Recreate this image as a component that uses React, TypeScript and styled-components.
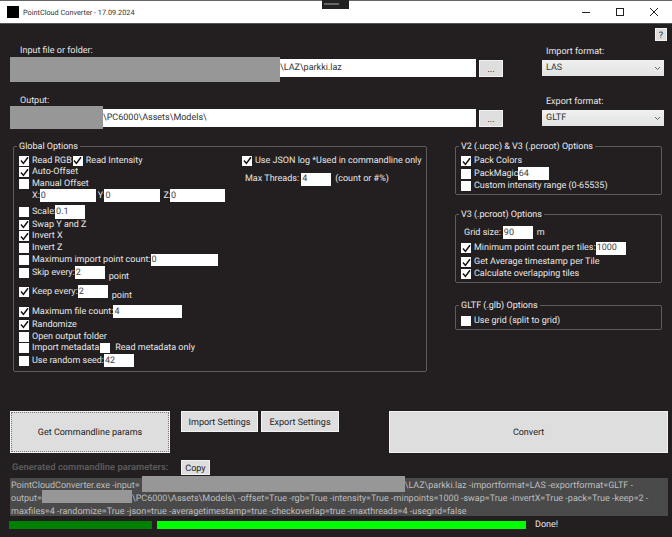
import React from "react"
import styled, { createGlobalStyle } from "styled-components"

const TEXT = 9

const Global = createGlobalStyle`
  html, body { margin: 0; padding: 0; background: #231f20; }
  * { box-sizing: border-box; }
  body {
    font-family: Roboto, "Noto Sans", sans-serif;
    font-size: ${TEXT}px;
    color: #e6e6e6;
    text-rendering: geometricPrecision;
  }
`

const Window = styled.div`
  position: relative;
  width: 672px;
  height: 537px;
  overflow: hidden;
  display: flex;
  flex-direction: column;
  background: #231f20;
`

const TitleBar = styled.header`
  height: 24px;
  flex: none;
  display: flex;
  align-items: center;
  background: #fff;
  border-top: 1px solid #666;
  border-bottom: 1px solid #555;
  padding-left: 7px;
  color: #333;
  font-size: 7.3px;
`

const AppIcon = styled.div`
  width: 12px;
  height: 12px;
  background: #000;
  margin-right: 4px;
`

const WindowButtons = styled.div`
  margin-left: auto;
  display: flex;
  margin-right: 1px;
`

const WindowButton = styled.div`
  width: 34px;
  height: 22px;
  display: flex;
  align-items: center;
  justify-content: center;
  svg { display: block; }
`

const Notch = styled.div`
  position: absolute;
  left: 322px;
  top: 0;
  width: 27px;
  height: 9px;
  background: #222;
  &::after {
    content: "";
    position: absolute;
    left: 2px;
    right: 10px;
    top: 3px;
    height: 2px;
    background: #666;
  }
`

const HelpRow = styled.div`
  height: 20px;
  flex: none;
  display: flex;
  justify-content: flex-end;
  padding: 4px 5px 0 0;
`

const Button = styled.div<{ $w: number; $h: number; $focused?: boolean }>`
  flex: none;
  width: ${(p) => p.$w}px;
  height: ${(p) => p.$h}px;
  display: flex;
  align-items: center;
  justify-content: center;
  padding-top: 2px;
  background: #dedede;
  border: 1px solid #f2f2f2;
  outline: ${(p) => (p.$focused ? "1px dotted #777" : "none")};
  outline-offset: -2px;
  color: #222;
  font-size: ${TEXT}px;
  white-space: nowrap;
`

const FormRow = styled.section<{ $mt?: number }>`
  flex: none;
  display: flex;
  align-items: flex-end;
  padding-left: 10px;
  margin-top: ${(p) => p.$mt ?? 0}px;
`

const PathField = styled.div`
  width: 466px;
  margin-right: 3px;
`

const FieldLabel = styled.div<{ $left: number }>`
  height: 15px;
  padding-top: 1px;
  line-height: 12px;
  padding-left: ${(p) => p.$left}px;
  color: #e6e6e6;
`

const PathBox = styled.div`
  position: relative;
  height: 18px;
  background: #fff;
  color: #333;
  line-height: 18px;
  white-space: nowrap;
`

const PathText = styled.span<{ $left: number }>`
  display: block;
  padding-left: ${(p) => p.$left}px;
`

const Redaction = styled.div<{ $w: number; $top: number; $h: number }>`
  position: absolute;
  left: 0;
  top: ${(p) => p.$top}px;
  width: ${(p) => p.$w}px;
  height: ${(p) => p.$h}px;
  background: #979797;
`

const FormatField = styled.div`
  width: 122px;
  margin-left: 39px;
`

const Select = styled.div`
  height: 16px;
  margin-bottom: 1px;
  display: flex;
  align-items: center;
  justify-content: space-between;
  padding: 0 3px 0 4px;
  background: linear-gradient(#f0f0f0, #e2e2e2);
  color: #333;
`

const OptionsArea = styled.main`
  flex: none;
  display: flex;
  margin-top: 13px;
  padding-left: 13px;
`

const Group = styled.fieldset<{ $w: number; $h: number; $mt?: number }>`
  width: ${(p) => p.$w}px;
  height: ${(p) => p.$h}px;
  margin: ${(p) => p.$mt ?? 0}px 0 0;
  padding: 2px 5px 0;
  border: 1px solid #5c5c5c;
  border-radius: 2px;
  min-inline-size: 0;
`

const GroupTitle = styled.legend`
  margin-left: -2px;
  padding: 1px 2px 0;
  height: 13px;
  line-height: 13px;
  color: #ececec;
`

const GlobalColumns = styled.div`
  display: flex;
`

const LeftColumn = styled.div`
  width: 223px;
  flex: none;
`

const SideColumn = styled.div`
  flex: none;
  display: flex;
  flex-direction: column;
`

const Row = styled.div<{ $h?: number; $mt?: number; $pl?: number }>`
  display: flex;
  align-items: center;
  height: ${(p) => p.$h ?? 11.5}px;
  margin-top: ${(p) => p.$mt ?? 0}px;
  padding-left: ${(p) => p.$pl ?? 0}px;
  white-space: nowrap;
`

const Box = styled.span<{ $ml?: number }>`
  flex: none;
  width: 10px;
  height: 10px;
  margin-left: ${(p) => p.$ml ?? 0}px;
  margin-right: 3px;
  background: #fff;
  display: inline-flex;
  align-items: center;
  justify-content: center;
  svg { display: block; }
`

const Caption = styled.span<{ $ml?: number }>`
  color: #e6e6e6;
  margin-left: ${(p) => p.$ml ?? 0}px;
`

const Suffix = styled(Caption)<{ $drop?: number }>`
  position: relative;
  top: ${(p) => p.$drop ?? 0}px;
  margin-left: ${(p) => p.$ml ?? 4}px;
`

const Field = styled.input<{ $w: number; $ml?: number; $h?: number }>`
  flex: none;
  width: ${(p) => p.$w}px;
  height: ${(p) => p.$h ?? 13}px;
  margin: 0 0 0 ${(p) => p.$ml ?? 0}px;
  padding: 0 1px;
  border: 0;
  outline: 0;
  background: #fff;
  color: #444;
  font-family: inherit;
  font-size: ${TEXT}px;
  text-rendering: geometricPrecision;
`

const RightColumn = styled.aside`
  margin-left: 28px;
  display: flex;
  flex-direction: column;
`

const ActionRow = styled.section`
  flex: none;
  display: flex;
  align-items: flex-start;
  margin-top: 39px;
  padding: 0 4px 0 10px;
`

const ImportButton = styled(Button)`
  margin-left: 11px;
`

const ExportButton = styled(Button)`
  margin-left: 3px;
`

const ConvertButton = styled(Button)`
  margin-left: auto;
`

const ParamsHeader = styled.div`
  flex: none;
  height: 15px;
  margin-top: 7px;
  padding-left: 12px;
  display: flex;
  align-items: center;
`

const ParamsLabel = styled.span`
  width: 169px;
  font-size: 9.4px;
  font-weight: 700;
  color: #585858;
  white-space: nowrap;
`

const ParamsBox = styled.div`
  flex: none;
  height: 38px;
  margin: 3px 4px 0 10px;
  padding: 1px 0 0 1px;
  background: #4a4a4a;
  color: #bdbdbd;
  line-height: 12.3px;
  white-space: nowrap;
`

const ParamsGap = styled.span<{ $w: number; $top: number; $h: number; $inset?: number }>`
  position: relative;
  display: inline-block;
  width: ${(p) => p.$w}px;
  height: 1em;
  &::after {
    content: "";
    position: absolute;
    left: ${(p) => p.$inset ?? 0}px;
    right: 0;
    top: ${(p) => p.$top}px;
    height: ${(p) => p.$h}px;
    background: #979797;
  }
`

const StatusRow = styled.footer`
  flex: none;
  height: 9px;
  margin-top: 4px;
  padding-left: 9px;
  display: flex;
  align-items: center;
`

const Progress = styled.div<{ $w: number; $color: string; $ml?: number }>`
  width: ${(p) => p.$w}px;
  height: 8px;
  margin-left: ${(p) => p.$ml ?? 0}px;
  background: ${(p) => p.$color};
`

const StatusText = styled.span`
  margin-left: 9px;
  color: #e6e6e6;
`

const Check = () => (
  <svg width="9" height="9" viewBox="0 0 9 9" fill="none">
    <path d="M1 4.6 L3.4 7.4 L8 1.2" stroke="#111" strokeWidth="1.5" />
  </svg>
)

const Option = ({ on, label, ...rest }: { on?: boolean; label: string; $h?: number; $mt?: number }) => (
  <Row {...rest}>
    <Box>{on && <Check />}</Box>
    <Caption>{label}</Caption>
  </Row>
)

const Chevron = () => (
  <svg width="7" height="5" viewBox="0 0 7 5" fill="none">
    <path d="M1 1 L3.5 3.5 L6 1" stroke="#666" strokeWidth="1" />
  </svg>
)

export default function App() {
  return (
    <Window>
      <Global />
      <TitleBar>
        <AppIcon />
        PointCloud Converter - 17.09.2024
        <WindowButtons>
          <WindowButton>
            <svg width="10" height="10" viewBox="0 0 10 10"><path d="M1 5.5 H9" stroke="#222" /></svg>
          </WindowButton>
          <WindowButton>
            <svg width="10" height="10" viewBox="0 0 10 10" fill="none"><rect x="1.5" y="1.5" width="7" height="7" stroke="#222" /></svg>
          </WindowButton>
          <WindowButton>
            <svg width="10" height="10" viewBox="0 0 10 10"><path d="M1 1 L9 9 M9 1 L1 9" stroke="#222" /></svg>
          </WindowButton>
        </WindowButtons>
      </TitleBar>
      <Notch />

      <HelpRow>
        <Button $w={12} $h={13}>?</Button>
      </HelpRow>

      <FormRow>
        <PathField>
          <FieldLabel $left={10}>Input file or folder:</FieldLabel>
          <PathBox>
            <PathText $left={270}>\LAZ\parkki.laz</PathText>
            <Redaction $w={270} $top={-2} $h={25} />
          </PathBox>
        </PathField>
        <Button $w={24} $h={17}>...</Button>
        <FormatField>
          <FieldLabel $left={4}>Import format:</FieldLabel>
          <Select>LAS<Chevron /></Select>
        </FormatField>
      </FormRow>

      <FormRow $mt={17}>
        <PathField>
          <FieldLabel $left={10}>Output:</FieldLabel>
          <PathBox>
            <PathText $left={93}>\PC6000\Assets\Models\</PathText>
            <Redaction $w={93} $top={-3} $h={23} />
          </PathBox>
        </PathField>
        <Button $w={24} $h={17}>...</Button>
        <FormatField>
          <FieldLabel $left={4}>Export format:</FieldLabel>
          <Select>GLTF<Chevron /></Select>
        </FormatField>
      </FormRow>

      <OptionsArea>
        <Group $w={414} $h={232}>
          <GroupTitle>Global Options</GroupTitle>
          <GlobalColumns>
            <LeftColumn>
              <Row>
                <Box><Check /></Box>
                <Caption>Read RGB</Caption>
                <Box $ml={1}><Check /></Box>
                <Caption>Read Intensity</Caption>
              </Row>
              <Option on label="Auto-Offset" />
              <Option label="Manual Offset" />
              <Row $h={12} $pl={13}>
                <Caption>X:</Caption>
                <Field $w={56} readOnly value="0" />
                <Caption $ml={2}>Y:</Caption>
                <Field $w={56} $ml={-1} readOnly value="0" />
                <Caption $ml={3}>Z:</Caption>
                <Field $w={55} $ml={-1} readOnly value="0" />
              </Row>
              <Row $h={14} $mt={3}>
                <Box />
                <Caption>Scale:</Caption>
                <Field $w={30} $h={14} $ml={-1} readOnly value="0.1" />
              </Row>
              <Option on label="Swap Y and Z" $h={12} />
              <Option on label="Invert X" />
              <Option label="Invert Z" />
              <Row $h={12}>
                <Box />
                <Caption>Maximum import point count:</Caption>
                <Field $w={67} readOnly value="0" $h={12} />
              </Row>
              <Row $h={14}>
                <Box />
                <Caption>Skip every:</Caption>
                <Field $w={30} readOnly value="2" />
                <Suffix $drop={4}>point</Suffix>
              </Row>
              <Row $h={14} $mt={5}>
                <Box><Check /></Box>
                <Caption>Keep every:</Caption>
                <Field $w={30} readOnly value="2" />
                <Suffix $drop={4}>point</Suffix>
              </Row>
              <Row $h={14} $mt={6}>
                <Box><Check /></Box>
                <Caption>Maximum file count:</Caption>
                <Field $w={69} readOnly value="4" />
              </Row>
              <Option on label="Randomize" $h={12} />
              <Option label="Open output folder" $h={12} />
              <Row>
                <Box />
                <Caption>Import metadata</Caption>
                <Box $ml={1} />
                <Caption $ml={2}>Read metadata only</Caption>
              </Row>
              <Row $h={13}>
                <Box />
                <Caption>Use random seed:</Caption>
                <Field $w={30} readOnly value="42" />
              </Row>
            </LeftColumn>
            <SideColumn>
              <Option on label="Use JSON log *Used in commandline only" />
              <Row $h={13} $mt={6} $pl={3}>
                <Caption>Max Threads:</Caption>
                <Field $w={30} $ml={2} readOnly value="4" />
                <Suffix>(count or #%)</Suffix>
              </Row>
            </SideColumn>
          </GlobalColumns>
        </Group>

        <RightColumn>
          <Group $w={207} $h={55}>
            <GroupTitle>V2 (.ucpc) &amp; V3 (.pcroot) Options</GroupTitle>
            <Option on label="Pack Colors" $h={12} />
            <Row $h={13}>
              <Box />
              <Caption>PackMagic:</Caption>
              <Field $w={31} $h={13} $ml={-3} readOnly value="64" />
            </Row>
            <Option label="Custom intensity range (0-65535)" $h={12} />
          </Group>
          <Group $w={207} $h={75} $mt={13}>
            <GroupTitle>V3 (.pcroot) Options</GroupTitle>
            <Row $h={15} $mt={2} $pl={3}>
              <Caption>Grid size:</Caption>
              <Field $w={30} $ml={2} readOnly value="90" />
              <Suffix>m</Suffix>
            </Row>
            <Row $h={14} $mt={1}>
              <Box><Check /></Box>
              <Caption>Minimum point count per tiles:</Caption>
              <Field $w={30} readOnly value="1000" />
            </Row>
            <Option on label="Get Average timestamp per Tile" $h={12} $mt={1} />
            <Option on label="Calculate overlapping tiles" />
          </Group>
          <Group $w={207} $h={31} $mt={16}>
            <GroupTitle>GLTF (.glb) Options</GroupTitle>
            <Option label="Use grid (split to grid)" $h={12} $mt={1} />
          </Group>
        </RightColumn>
      </OptionsArea>

      <ActionRow>
        <Button $w={160} $h={42} $focused>Get Commandline params</Button>
        <ImportButton $w={77} $h={21}>Import Settings</ImportButton>
        <ExportButton $w={78} $h={21}>Export Settings</ExportButton>
        <ConvertButton $w={279} $h={42}>Convert</ConvertButton>
      </ActionRow>

      <ParamsHeader>
        <ParamsLabel>Generated commandline parameters:</ParamsLabel>
        <Button $w={29} $h={15}>Copy</Button>
      </ParamsHeader>

      <ParamsBox>
        <div>PointCloudConverter.exe -input=<ParamsGap $w={265} $inset={2} $top={-3} $h={16} />\LAZ\parkki.laz -importformat=LAS -exportformat=GLTF -</div>
        <div>output=<ParamsGap $w={90} $top={-2} $h={13} />\PC6000\Assets\Models\ -offset=True -rgb=True -intensity=True -minpoints=1000 -swap=True -invertX=True -pack=True -keep=2 -</div>
        <div>maxfiles=4 -randomize=True -json=true -averagetimestamp=true -checkoverlap=true -maxthreads=4 -usegrid=false</div>
      </ParamsBox>

      <StatusRow>
        <Progress $w={143} $color="#008000" />
        <Progress $w={369} $color="#00ff00" $ml={5} />
        <StatusText>Done!</StatusText>
      </StatusRow>
    </Window>
  )
}
